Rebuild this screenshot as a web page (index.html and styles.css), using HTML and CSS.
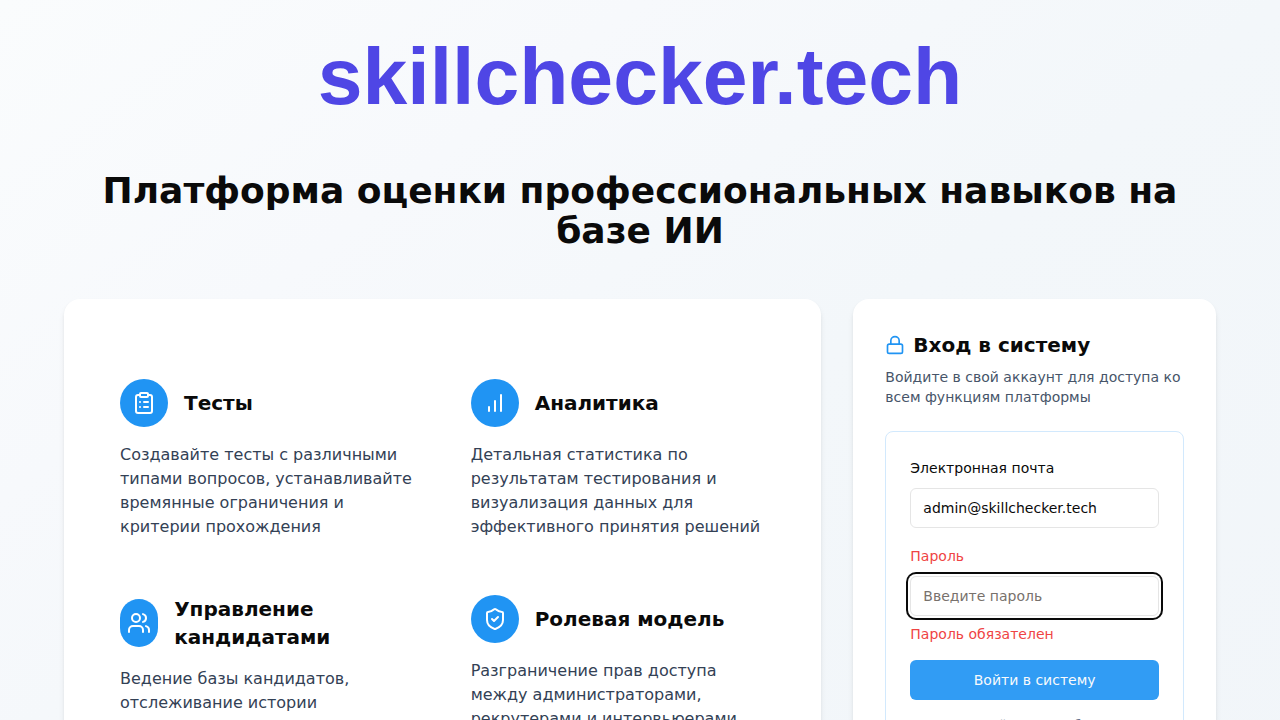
FILE: index.html
```html
<!DOCTYPE html>
<html lang="ru">
<head>
<meta charset="utf-8">
<title>skillchecker.tech</title>
<link rel="stylesheet" href="styles.css">
</head>
<body>
<main class="page">
  <div class="brand">skillchecker.tech</div>
  <h1 class="headline">Платформа оценки профессиональных навыков на базе ИИ</h1>
  <div class="columns">
    <section class="card features">
      <article class="feature">
        <header class="feature-head">
          <div class="badge"><svg class="icon" viewBox="0 0 24 24"><rect width="8" height="4" x="8" y="2" rx="1"/><path d="M16 4h2a2 2 0 0 1 2 2v14a2 2 0 0 1-2 2H6a2 2 0 0 1-2-2V6a2 2 0 0 1 2-2h2M12 11h4M12 16h4M8 11h.01M8 16h.01"/></svg></div>
          <h2>Тесты</h2>
        </header>
        <p>Создавайте тесты с различными типами вопросов, устанавливайте времянные ограничения и критерии прохождения</p>
      </article>
      <article class="feature">
        <header class="feature-head">
          <div class="badge"><svg class="icon" viewBox="0 0 24 24"><path d="M12 20V10M18 20V4M6 20v-4"/></svg></div>
          <h2>Аналитика</h2>
        </header>
        <p>Детальная статистика по результатам тестирования и визуализация данных для эффективного принятия решений</p>
      </article>
      <article class="feature">
        <header class="feature-head">
          <div class="badge"><svg class="icon" viewBox="0 0 24 24"><path d="M16 21v-2a4 4 0 0 0-4-4H6a4 4 0 0 0-4 4v2"/><circle cx="9" cy="7" r="4"/><path d="M22 21v-2a4 4 0 0 0-3-3.87M16 3.13a4 4 0 0 1 0 7.75"/></svg></div>
          <h2>Управление кандидатами</h2>
        </header>
        <p>Ведение базы кандидатов, отслеживание истории</p>
      </article>
      <article class="feature">
        <header class="feature-head">
          <div class="badge"><svg class="icon" viewBox="0 0 24 24"><path d="M20 13c0 5-3.5 7.5-7.66 8.95a1 1 0 0 1-.67-.01C7.5 20.5 4 18 4 13V6a1 1 0 0 1 1-1c2 0 4.5-1.2 6.24-2.72a1.17 1.17 0 0 1 1.52 0C14.51 3.81 17 5 19 5a1 1 0 0 1 1 1z"/><path d="m9 12 2 2 4-4"/></svg></div>
          <h2>Ролевая модель</h2>
        </header>
        <p>Разграничение прав доступа между администраторами, рекрутерами и интервьюерами</p>
      </article>
    </section>
    <section class="card login">
      <h2 class="login-title"><svg class="lock" viewBox="0 0 24 24"><rect width="18" height="11" x="3" y="11" rx="2"/><path d="M7 11V7a5 5 0 0 1 10 0v4"/></svg>Вход в систему</h2>
      <p class="login-text">Войдите в свой аккаунт для доступа ко всем функциям платформы</p>
      <form class="form">
        <div class="field">
          <label for="email">Электронная почта</label>
          <input id="email" type="email" value="admin@skillchecker.tech">
        </div>
        <div class="field invalid">
          <label for="password">Пароль</label>
          <input id="password" type="password" placeholder="Введите пароль">
          <p class="message">Пароль обязателен</p>
        </div>
        <button type="button">Войти в систему</button>
        <p class="hint">Нет учетной записи? Обратитесь к администратору</p>
      </form>
    </section>
  </div>
</main>
</body>
</html>
```
FILE: styles.css
```css
* { box-sizing: border-box; margin: 0; padding: 0; }
html { height: 100%; overflow: hidden; }
body {
  height: 100%;
  overflow: hidden;
  font-family: "DejaVu Sans", sans-serif;
  line-height: 24px;
  color: #0a0a0a;
}
.page {
  min-height: 1000px;
  padding: 32px 64px;
  background: linear-gradient(to bottom right, #fafcfd, #f7f9fc 25%, #f3f7fa 50%, #f1f5f9);
}
.brand {
  height: 90px;
  font: bold 80.5px/88px "Liberation Sans", sans-serif;
  text-align: center;
  color: #4f46e5;
}
.headline {
  margin: 49px 0 48px;
  font-size: 36px;
  line-height: 40px;
  text-align: center;
}
.columns { display: grid; grid-template-columns: repeat(3, 1fr); gap: 32px; }
.card {
  padding: 32px;
  background: #fff;
  border-radius: 16px;
  box-shadow: 0 4px 6px -1px rgba(0, 0, 0, .1), 0 2px 4px -2px rgba(0, 0, 0, .1);
}
.features {
  grid-column: span 2;
  display: grid;
  grid-template-columns: 1fr 1fr;
  align-content: start;
  gap: 8px;
  padding-top: 56px;
  min-height: 560px;
}
.feature { padding: 24px; }
.feature-head { display: flex; align-items: center; gap: 16px; margin-bottom: 16px; }
.feature h2 { font-size: 20px; line-height: 28px; }
.feature p { color: #334155; }
.badge {
  display: flex;
  align-items: center;
  justify-content: center;
  width: 48px;
  height: 48px;
  border-radius: 999px;
  background: #2094f3;
}
.icon, .lock {
  width: 24px;
  height: 24px;
  fill: none;
  stroke: #fff;
  stroke-width: 2;
  stroke-linecap: round;
  stroke-linejoin: round;
}
.lock { width: 20px; height: 20px; stroke: #2094f3; }
.login-title { display: flex; align-items: center; gap: 8px; font-size: 20px; line-height: 28px; }
.login-text { margin: 8px 0 24px; font-size: 14px; line-height: 20px; color: #475569; }
.form { padding: 24px; border: 1px solid #d2e9fd; border-radius: 8px; font-size: 14px; }
.field { margin-bottom: 16px; }
label { display: block; margin-bottom: 8px; }
input {
  display: block;
  width: 100%;
  height: 40px;
  padding: 8px 12px;
  border: 1px solid #e5e5e5;
  border-radius: 6px;
  background: #fff;
  color: #0a0a0a;
  font: 14px/20px "DejaVu Sans", sans-serif;
}
input::placeholder { color: #78716c; }
.invalid label, .message { color: #ef4444; }
.invalid input { box-shadow: 0 0 0 2px #fff, 0 0 0 4px #0a0a0a; }
.message { margin-top: 8px; line-height: 20px; }
button {
  display: block;
  width: 100%;
  height: 40px;
  border: 0;
  border-radius: 6px;
  background: #319cf4;
  color: #f8fafc;
  font: 14px/20px "DejaVu Sans", sans-serif;
}
.hint { margin-top: 16px; padding-left: 9px; font-size: 12px; line-height: 18px; text-align: center; color: #64748b; }
```
